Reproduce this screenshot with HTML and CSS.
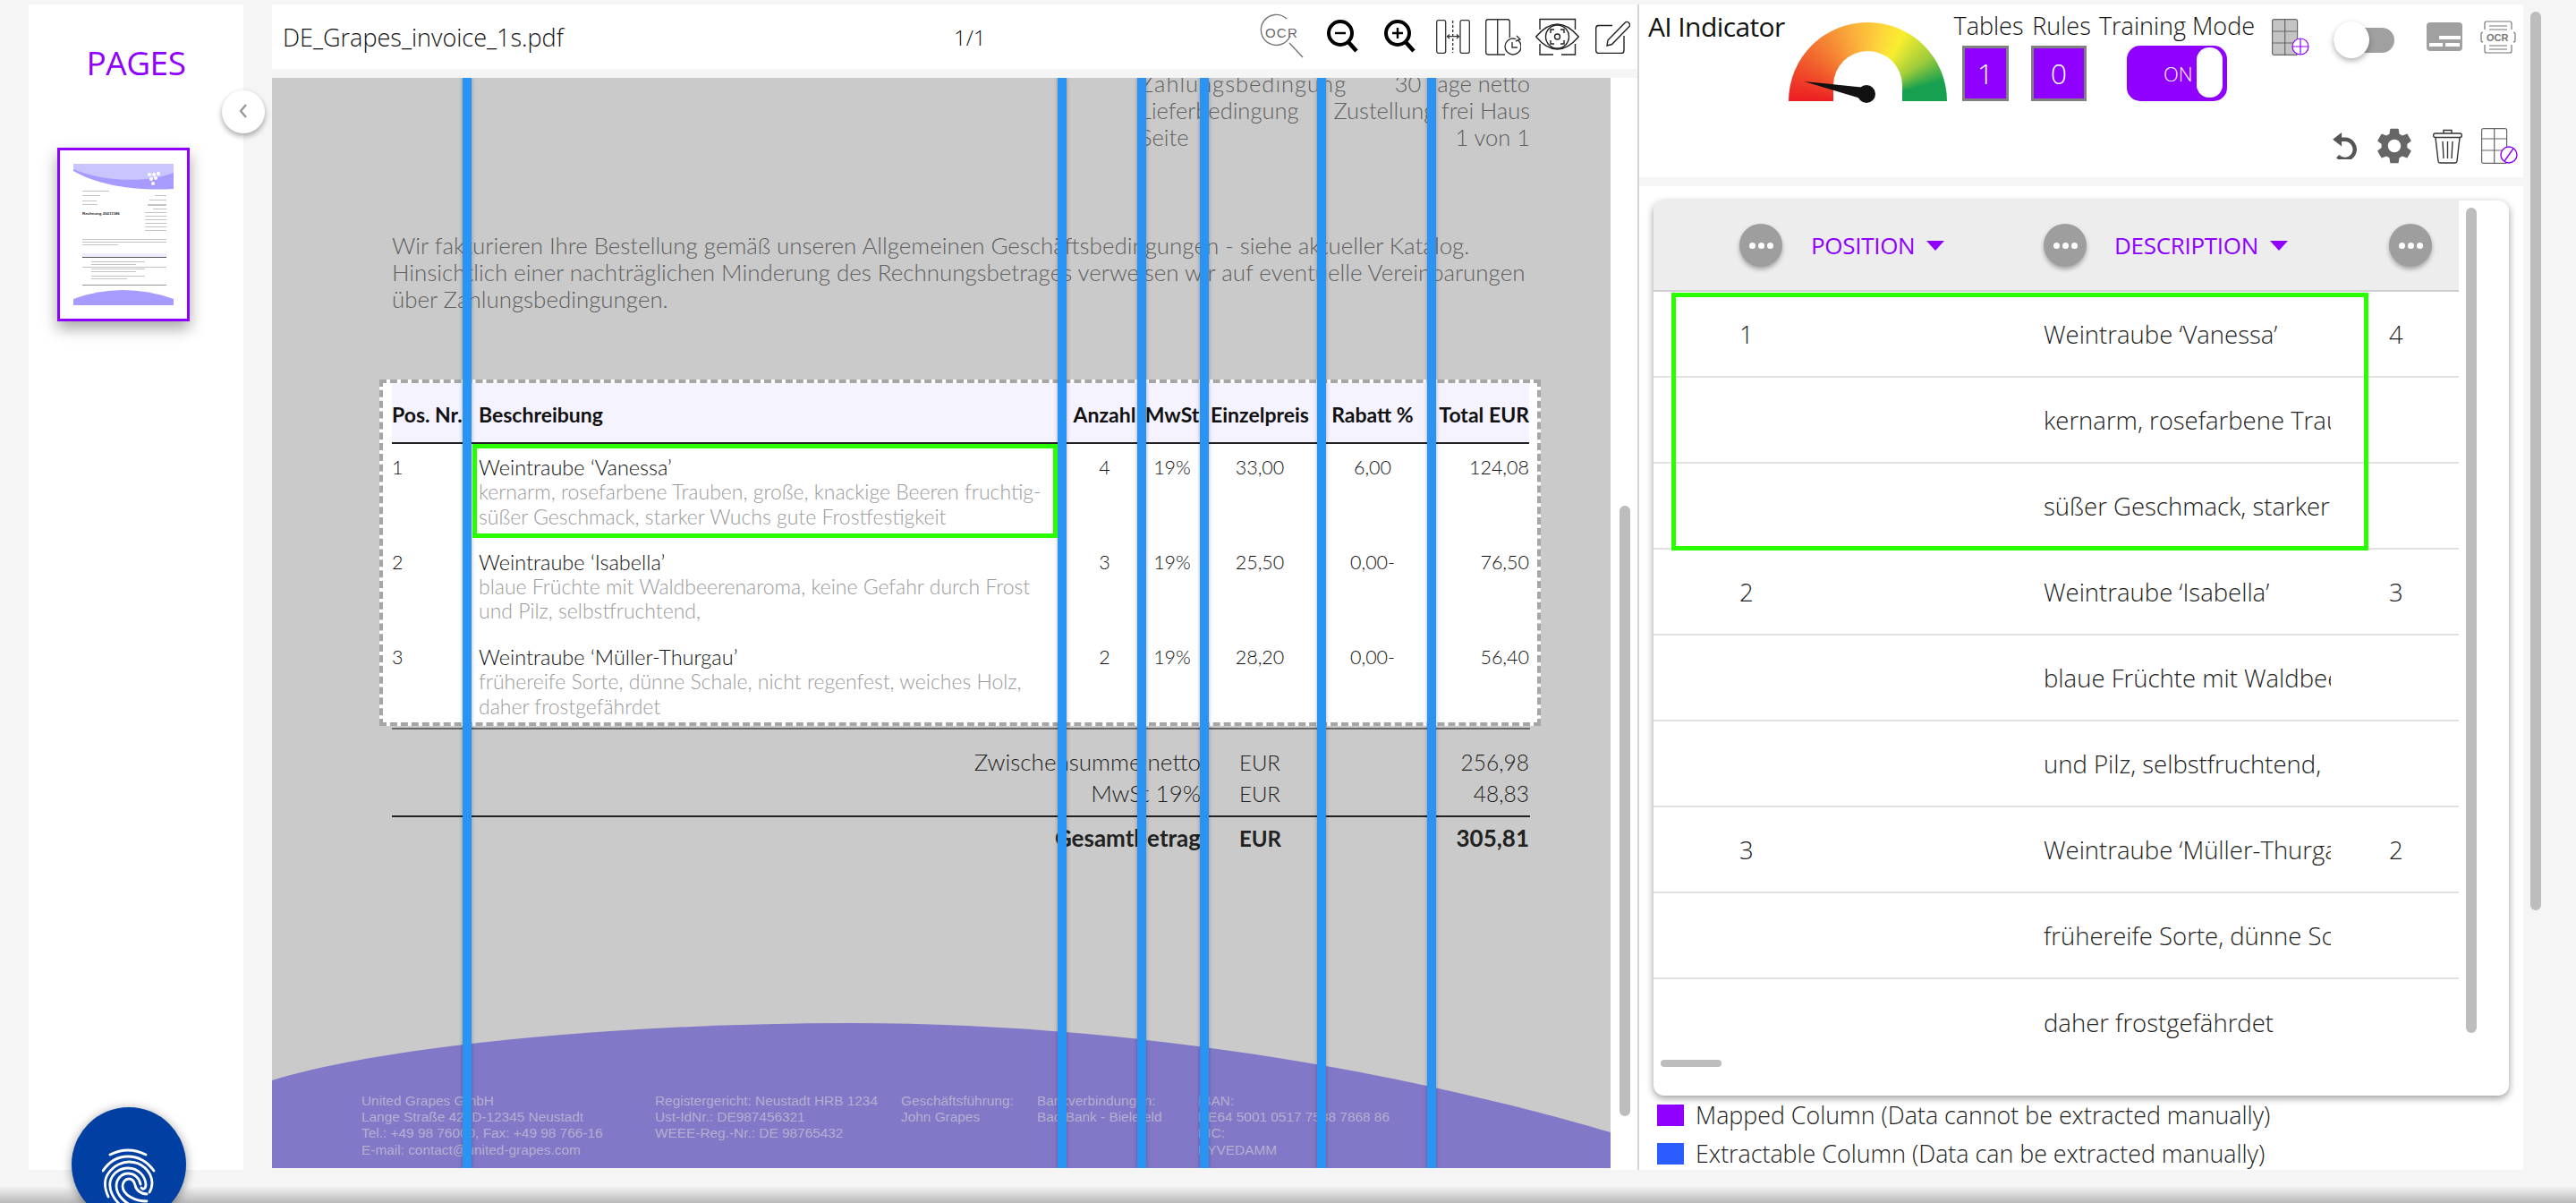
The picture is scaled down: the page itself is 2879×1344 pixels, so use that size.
FILE: index.html
```html
<!DOCTYPE html>
<html lang="en">
<head>
    <meta charset="UTF-8">
    <title>Invoice Mapping</title>
    <link rel="stylesheet" href="styles.css">
</head>
<body>
<div class="app">
    <!-- Pages sidebar -->
    <aside class="sidebar">
        <h2 class="pages-title">PAGES</h2>
        <div class="thumb">
            <svg width="142" height="188" viewBox="0 0 142 188">
                <path d="M15 15H127V43C85 46 40 38 15 23Z" fill="#a89bff"/>
                <path d="M15 15H127V25C100 36 50 36 15 21Z" fill="#c9c6ff"/>
                <g fill="#fff"><circle cx="100" cy="27" r="2"/><circle cx="105" cy="27" r="2"/><circle cx="110" cy="26" r="2"/><circle cx="102" cy="32" r="2"/><circle cx="107" cy="31" r="2"/><circle cx="104" cy="37" r="2"/></g>
                <g fill="#c4c4c4">
                    <rect x="25" y="45" width="30" height="1"/><rect x="25" y="50" width="20" height="1"/><rect x="25" y="56" width="16" height="1"/><rect x="25" y="60" width="17" height="1"/>
                    <rect x="106" y="50" width="13" height="1"/><rect x="100" y="55" width="19" height="1"/><rect x="98" y="60" width="21" height="2"/><rect x="104" y="65" width="15" height="1"/>
                    <rect x="95" y="69" width="24" height="1"/><rect x="95" y="73" width="24" height="1"/><rect x="95" y="77" width="24" height="1"/><rect x="95" y="81" width="24" height="1"/><rect x="95" y="85" width="24" height="1"/><rect x="95" y="89" width="24" height="1"/>
                    <rect x="25" y="99" width="94" height="1"/><rect x="25" y="102" width="94" height="1"/><rect x="25" y="105" width="40" height="1"/>
                    <rect x="35" y="124" width="60" height="1"/><rect x="35" y="127" width="50" height="1"/><rect x="35" y="132" width="60" height="1"/><rect x="35" y="135" width="50" height="1"/><rect x="35" y="140" width="60" height="1"/><rect x="35" y="143" width="40" height="1"/>
                </g>
                <rect x="25" y="115" width="94" height="4" fill="#efedff"/>
                <rect x="25" y="119" width="94" height="1" fill="#555"/>
                <rect x="25" y="130" width="94" height="0.5" fill="#888"/>
                <rect x="25" y="150" width="94" height="1" fill="#999"/>
                <text class="thumb-text" x="25" y="72">Rechnung 20211186</text>
                <path d="M15 166Q70 146 127 166V173H15Z" fill="#a89bff"/>
            </svg>
        </div>
    </aside>
    <button class="collapse-btn">
        <svg width="10" height="18" viewBox="0 0 10 18"><path d="M8 2L2 9L8 16" fill="none" stroke="#999" stroke-width="2.4"/></svg>
    </button>

    <!-- Document viewer -->
    <main class="viewer">
        <header class="doc-header">
            <span class="doc-name">DE_Grapes_invoice_1s.pdf</span>
            <span class="doc-count">1/1</span>
            <div class="doc-tools">
                <svg class="tool-ocr" width="52" height="52" viewBox="0 0 52 52">
                    <path d="M31 7A17 17 0 1 0 35 26" fill="none" stroke="#777" stroke-width="1.4"/>
                    <path d="M34 34L49 50" stroke="#777" stroke-width="1.4"/>
                    <text class="ocr-text" x="7" y="28">OCR</text>
                </svg>
                <svg class="tool-zoom-out" width="36" height="40" viewBox="0 0 36 40">
                    <circle cx="16" cy="17" r="13" fill="none" stroke="#000" stroke-width="4"/>
                    <path d="M25 27L34 37" stroke="#000" stroke-width="4.6"/>
                    <path d="M10 17H22" stroke="#000" stroke-width="2.4"/>
                </svg>
                <svg class="tool-zoom-in" width="36" height="40" viewBox="0 0 36 40">
                    <circle cx="16" cy="17" r="13" fill="none" stroke="#000" stroke-width="4"/>
                    <path d="M25 27L34 37" stroke="#000" stroke-width="4.6"/>
                    <path d="M10 17H22M16 11V23" stroke="#000" stroke-width="2.4"/>
                </svg>
                <svg class="tool-split" width="38" height="38" viewBox="0 0 38 38" fill="none" stroke="#333" stroke-width="1.3">
                    <rect x="0.7" y="0.7" width="10" height="36.6" rx="2"/>
                    <rect x="27" y="0.7" width="10.3" height="36.6" rx="2"/>
                    <path d="M18.7 1V37" stroke-dasharray="3 2"/>
                    <path d="M13 18.7H25M15 16.5L12.5 18.7L15 21M23 16.5L25.5 18.7L23 21"/>
                </svg>
                <svg class="tool-clock" width="40" height="41" viewBox="0 0 40 41" fill="none" stroke="#333" stroke-width="1.4">
                    <path d="M22 40H3A2.5 2.5 0 0 1 .7 37.5V3A2.5 2.5 0 0 1 3 .7H25A2.5 2.5 0 0 1 27.3 3V21"/>
                    <path d="M13.7 1V40"/>
                    <circle cx="31" cy="31" r="9" fill="#fff"/>
                    <path d="M30 26V32H36"/>
                    <path d="M35 19L39 23L34 25" fill="#fff"/>
                </svg>
                <svg class="tool-eye" width="49" height="42" viewBox="0 0 49 42" fill="none" stroke="#222" stroke-width="1.4">
                    <path d="M5 13V1.5H44.5V13M5 29V41H20M29 41H44.5V29"/>
                    <path d="M.7 21C10 10 17 7 24.5 7S39 10 48.3 21C39 32 32 35 24.5 35S10 32 .7 21Z" fill="#fff"/>
                    <circle cx="24.5" cy="21" r="13"/>
                    <circle cx="24.5" cy="21" r="3"/>
                    <path d="M17 17V13H21M28 13H32V17M32 25V29H28M21 29H17V25"/>
                </svg>
                <svg class="tool-edit" width="39" height="38" viewBox="0 0 39 38" fill="none" stroke="#222" stroke-width="1.4">
                    <path d="M19 6.5H3.5A3 3 0 0 0 .7 9.5V34.5A3 3 0 0 0 3.5 37.5H29A3 3 0 0 0 32 34.5V18"/>
                    <path d="M14 23L33 3.5A2.8 2.8 0 0 1 37.5 8L18.500 27.500L13 29Z"/>
                </svg>
            </div>
        </header>
        <div class="doc-wrap">
            <section class="doc">
                <div class="doc-meta">
                    <div class="meta-row"><span>Zahlungsbedingung</span><span>30 Tage netto</span></div>
                    <div class="meta-row"><span>Lieferbedingung</span><span>Zustellung frei Haus</span></div>
                    <div class="meta-row"><span>Seite</span><span>1 von 1</span></div>
                </div>
                <p class="doc-intro">Wir fakturieren Ihre Bestellung gemäß unseren Allgemeinen Geschäftsbedingungen - siehe aktueller Katalog.<br>Hinsichtlich einer nachträglichen Minderung des Rechnungsbetrages verweisen wir auf eventuelle Vereinbarungen<br>über Zahlungsbedingungen.</p>
                <div class="invoice-box">
                    <table class="invoice">
                        <colgroup><col class="c-pos"><col class="c-desc"><col class="c-qty"><col class="c-tax"><col class="c-price"><col class="c-disc"><col class="c-total"></colgroup>
                        <thead>
                            <tr><th>Pos. Nr.</th><th>Beschreibung</th><th class="mid">Anzahl</th><th class="mid">MwSt</th><th class="mid">Einzelpreis</th><th class="mid">Rabatt %</th><th class="end">Total EUR</th></tr>
                        </thead>
                        <tbody>
                            <tr><td class="num">1</td><td>Weintraube ‘Vanessa’<span class="desc">kernarm, rosefarbene Trauben, große, knackige Beeren fruchtig-</span><span class="desc">süßer Geschmack, starker Wuchs gute Frostfestigkeit</span></td><td class="mid">4</td><td class="mid">19%</td><td class="mid">33,00</td><td class="mid">6,00</td><td class="end">124,08</td></tr>
                            <tr><td class="num">2</td><td>Weintraube ‘Isabella’<span class="desc">blaue Früchte mit Waldbeerenaroma, keine Gefahr durch Frost</span><span class="desc">und Pilz, selbstfruchtend,</span></td><td class="mid">3</td><td class="mid">19%</td><td class="mid">25,50</td><td class="mid">0,00-</td><td class="end">76,50</td></tr>
                            <tr><td class="num">3</td><td>Weintraube ‘Müller-Thurgau’<span class="desc">frühereife Sorte, dünne Schale, nicht regenfest, weiches Holz,</span><span class="desc">daher frostgefährdet</span></td><td class="mid">2</td><td class="mid">19%</td><td class="mid">28,20</td><td class="mid">0,00-</td><td class="end">56,40</td></tr>
                        </tbody>
                    </table>
                </div>
                <div class="sum-rule"></div>
                <div class="totals">
                    <span class="t-label">Zwischensumme netto</span><span class="t-cur">EUR</span><span class="t-val">256,98</span>
                    <span class="t-label">MwSt 19%</span><span class="t-cur">EUR</span><span class="t-val">48,83</span>
                </div>
                <div class="total-rule"></div>
                <div class="totals grand">
                    <span class="t-label">Gesamtbetrag</span><span class="t-cur">EUR</span><span class="t-val">305,81</span>
                </div>
                <footer class="doc-footer">
                    <svg class="footer-arc" width="1496" height="162" viewBox="0 0 1496 162"><path d="M0 64C130 24 400 0 646 0C950 0 1250 50 1496 122V162H0Z" fill="#8278c8"/></svg>
                    <div class="footer-cols">
                        <div>United Grapes GmbH<br>Lange Straße 42, D-12345 Neustadt<br>Tel.: +49 98 76000, Fax: +49 98 766-16<br>E-mail: contact@united-grapes.com</div>
                        <div>Registergericht: Neustadt HRB 1234<br>Ust-IdNr.: DE987456321<br>WEEE-Reg.-Nr.: DE 98765432</div>
                        <div>Geschäftsführung:<br>John Grapes</div>
                        <div>Bankverbindungen:<br>Bad Bank - Bielefeld</div>
                        <div>IBAN:<br>DE64 5001 0517 7538 7868 86<br>BIC:<br>BYVEDAMM</div>
                    </div>
                </footer>
                <i class="col-line l1"></i><i class="col-line l2"></i><i class="col-line l3"></i><i class="col-line l4"></i><i class="col-line l5"></i><i class="col-line l6"></i>
                <i class="hit-box"></i>
            </section>
            <div class="doc-rail"><div class="doc-thumb"></div></div>
        </div>
    </main>

    <!-- Mapping panel -->
    <div class="panel">
        <section class="controls">
            <div class="top-row">
                <h3 class="ai-title">AI Indicator</h3>
                <div class="gauge">
                    <svg class="needle" width="90" height="40" viewBox="0 0 90 40"><path d="M7 6L76 13L74 26Z" fill="#111"/><circle cx="77" cy="20" r="10" fill="#111"/></svg>
                </div>
                <div class="stat stat-tables"><span class="stat-label">Tables</span><div class="stat-box box-tables">1</div></div>
                <div class="stat stat-rules"><span class="stat-label">Rules</span><div class="stat-box box-rules">0</div></div>
                <div class="stat stat-mode"><span class="stat-label">Training Mode</span><div class="mode-toggle"><span>ON</span><i></i></div></div>
                <svg class="icon-add" width="42" height="41" viewBox="0 0 42 41" fill="none" stroke="#666" stroke-width="1.2">
                    <rect x="0.6" y="0.6" width="28" height="39.800" rx="2" fill="#c4c4c4"/>
                    <path d="M14.700 1V40M1 14H28M1 27H28"/>
                    <circle cx="32" cy="31" r="9" fill="#fff" stroke="#8f00ff"/>
                    <path d="M23 31H41M32 22V40" stroke="#8f00ff"/>
                </svg>
                <div class="grey-switch"><i></i></div>
                <svg class="icon-card" width="40" height="32" viewBox="0 0 40 32">
                    <rect width="40" height="32" rx="4" fill="#a0a0a0"/>
                    <path d="M14 17H38M3 25H18M21 25H37" stroke="#fff" stroke-width="4"/>
                </svg>
                <svg class="icon-ocr" width="40" height="37" viewBox="0 0 40 37" fill="none" stroke="#777" stroke-width="1.2">
                    <path d="M5 10V3Q5 1 7 1H33Q35 1 35 3V10M5 27V34Q5 36 7 36H33Q35 36 35 34V27"/>
                    <path d="M10 6H30M10 10H30M10 28H30M10 32H30"/>
                    <path d="M3 13Q1 13 1 15V22Q1 24 3 24M37 13Q39 13 39 15V22Q39 24 37 24"/>
                    <text class="ocr-small" x="7" y="23">OCR</text>
                </svg>
            </div>
            <div class="tool-row">
                <svg class="icon-undo" width="30" height="30" viewBox="0 0 27 27">
                    <path d="M8 7H13A10 10 0 1 1 6 24" fill="none" stroke="#555" stroke-width="4"/>
                    <path d="M10 0V14L1 7Z" fill="#555"/>
                </svg>
                <svg class="icon-gear" width="48" height="48" viewBox="0 0 24 24"><path fill="#666" d="M19.14 12.94c.04-.3.06-.61.06-.94 0-.32-.02-.64-.07-.94l2.03-1.58c.18-.14.23-.41.12-.61l-1.92-3.32c-.12-.22-.37-.29-.59-.22l-2.39.96c-.5-.38-1.03-.7-1.62-.94l-.36-2.54c-.04-.24-.24-.41-.48-.41h-3.84c-.24 0-.43.17-.47.41l-.36 2.54c-.59.24-1.13.57-1.62.94l-2.39-.96c-.22-.08-.47 0-.59.22L2.74 8.87c-.12.21-.08.47.12.61l2.03 1.58c-.05.3-.09.63-.09.94s.02.64.07.94l-2.03 1.58c-.18.14-.23.41-.12.61l1.92 3.32c.12.22.37.29.59.22l2.39-.96c.5.38 1.03.7 1.62.94l.36 2.54c.05.24.24.41.48.41h3.84c.24 0 .44-.17.47-.41l.36-2.54c.59-.24 1.13-.56 1.62-.94l2.39.96c.22.08.47 0 .59-.22l1.92-3.32c.12-.22.07-.47-.12-.61l-2.01-1.58zM12 15.6c-1.98 0-3.6-1.62-3.6-3.6s1.62-3.6 3.6-3.6 3.6 1.62 3.6 3.6-1.62 3.6-3.6 3.6z"/></svg>
                <svg class="icon-trash" width="33" height="39" viewBox="0 0 33 39" fill="none" stroke="#333" stroke-width="1.4">
                    <path d="M12 5V1.500H21V5"/>
                    <rect x="0.7" y="5" width="31.600" height="4.500" rx="2"/>
                    <path d="M3 10L6 36Q6.300 38 8 38H25Q26.700 38 27 36L30 10"/>
                    <path d="M11 14L12 33M16.500 14V33M22 14L21 33"/>
                </svg>
                <svg class="icon-block" width="41" height="40" viewBox="0 0 41 40" fill="none" stroke="#666" stroke-width="1.2">
                    <rect x="0.6" y="0.6" width="28" height="38.800" rx="2"/>
                    <path d="M14.700 1V39M1 12H28M1 25H28"/>
                    <circle cx="31" cy="30" r="9" fill="#fff" stroke="#8f00ff" stroke-width="1.4"/>
                    <path d="M26 37L36 23" stroke="#8f00ff" stroke-width="1.4"/>
                </svg>
            </div>
        </section>

        <section class="mapping">
            <div class="map-card">
                <div class="map-view">
                    <div class="map-head">
                        <div class="map-col"><span class="dots"><i></i><i></i><i></i></span><span class="map-name">POSITION</span><i class="caret"></i></div>
                        <div class="map-col"><span class="dots"><i></i><i></i><i></i></span><span class="map-name">DESCRIPTION</span><i class="caret"></i></div>
                        <div class="map-col"><span class="dots"><i></i><i></i><i></i></span></div>
                    </div>
                    <div class="map-row"><span>1</span><span>Weintraube ‘Vanessa’</span><span>4</span></div>
                    <div class="map-row"><span></span><span>kernarm, rosefarbene Trauben, große</span><span></span></div>
                    <div class="map-row"><span></span><span>süßer Geschmack, starker Wuchs gute</span><span></span></div>
                    <div class="map-row"><span>2</span><span>Weintraube ‘Isabella’</span><span>3</span></div>
                    <div class="map-row"><span></span><span>blaue Früchte mit Waldbeerenaroma</span><span></span></div>
                    <div class="map-row"><span></span><span>und Pilz, selbstfruchtend,</span><span></span></div>
                    <div class="map-row"><span>3</span><span>Weintraube ‘Müller-Thurgau’</span><span>2</span></div>
                    <div class="map-row"><span></span><span>frühereife Sorte, dünne Schale, nicht</span><span></span></div>
                    <div class="map-row last"><span></span><span>daher frostgefährdet</span><span></span></div>
                </div>
                <i class="map-hit"></i>
                <i class="map-vscroll"></i>
                <i class="map-hscroll"></i>
            </div>
            <div class="legend-row"><i class="swatch mapped"></i>Mapped Column (Data cannot be extracted manually)</div>
            <div class="legend-row"><i class="swatch extract"></i>Extractable Column (Data can be extracted manually)</div>
        </section>
    </div>
    <div class="page-scroll"></div>
</div>
<div class="bottom-bar"></div>

<button class="finger-btn">
    <svg width="60" height="68" viewBox="0 0 60 68" fill="none" stroke="#fff" stroke-width="2.8" stroke-linecap="round">
        <path d="M9 8Q29 -2 49 8"/>
        <path d="M1 26C10 13 21 10 29 10C39 10 50 15 58 26"/>
        <path d="M7 55C3 46 2 36 7 29C14 19 24 16 30 16C44 16 55 26 56 39C56 44 55 47 53 50"/>
        <path d="M20 64C12 56 8 47 9 39C11 28 21 23 29 23C41 23 48 32 49 41C49 46 46 48 44 45"/>
        <path d="M38 67C26 63 16 53 16 43C16 35 22 29 29 29C37 29 42 35 43 41"/>
        <path d="M50 60C37 60 23 53 23 43C23 39 26 35 30 35C34 35 36 38 37 42C38 48 44 52 50 52"/>
    </svg>
</button>
</body>
</html>
```

FILE: styles.css
```css
/* General Styling */
* {
    box-sizing: border-box;
}
html, body {
    height: 100%;
}
body {
    margin: 0;
    width: 2879px;
    height: 1344px;
    overflow: hidden;
    position: relative;
    background-color: #f5f5f5;
    font-family: "Open Sans", sans-serif;
    font-weight: 300;
    color: #111;
}
h2, h3, p {
    margin: 0;
    font-weight: inherit;
}
i {
    display: block;
}
.app {
    display: flex;
    align-items: flex-start;
    height: 1325px;
    padding: 5px 0 0 32px;
}
.bottom-bar {
    height: 19px;
    background: linear-gradient(#f5f5f5, #b8b8b8);
}

/* Pages sidebar */
.sidebar {
    flex: none;
    width: 240px;
    height: 1302px;
    margin-right: 32px;
    padding-top: 42px;
    background-color: #fff;
}
.pages-title {
    width: 240px;
    text-align: center;
    color: #8f00ff;
    font-size: 37px;
    font-weight: 400;
    line-height: 46px;
    letter-spacing: -0.5px;
}
.thumb {
    width: 148px;
    height: 194px;
    margin: 72px 0 0 32px;
    border: 3px solid #8f00ff;
    background-color: #fff;
    box-shadow: 0 8px 16px rgba(0, 0, 0, 0.35);
}
.thumb svg {
    display: block;
}
.thumb-text {
    font-family: "Liberation Sans", sans-serif;
    font-size: 4.4px;
    font-weight: 700;
    fill: #222;
}
.collapse-btn {
    position: absolute;
    left: 248px;
    top: 101px;
    width: 48px;
    height: 48px;
    padding: 0;
    border: none;
    border-radius: 50%;
    background-color: #fff;
    box-shadow: 0 3px 6px rgba(0, 0, 0, 0.35);
}
.finger-btn {
    position: absolute;
    left: 80px;
    top: 1237px;
    width: 128px;
    height: 128px;
    padding: 30px 0 0 0;
    border: none;
    border-radius: 50%;
    background-color: #023fa3;
    box-shadow: 0 2px 12px rgba(0, 0, 0, 0.4);
    text-align: center;
    line-height: 0;
}
.finger-btn svg {
    vertical-align: top;
}

/* Document viewer */
.viewer {
    flex: none;
    width: 1528px;
    height: 1302px;
    border-right: 2px solid #d4d4d4;
}
.doc-header {
    display: flex;
    align-items: center;
    height: 72px;
    padding-left: 12px;
    margin-bottom: 10px;
    background-color: #fff;
}
.doc-name {
    width: 750px;
    font-size: 27px;
}
.doc-count {
    font-size: 24px;
}
.doc-tools {
    display: flex;
    align-items: flex-start;
    align-self: flex-start;
    margin-left: auto;
    padding-right: 8px;
}
.doc-tools svg {
    display: block;
}
.tool-ocr { margin-top: 9px; }
.tool-zoom-out { margin: 15px 0 0 23px; }
.tool-zoom-in { margin: 15px 0 0 28px; }
.tool-split { margin: 17px 0 0 23px; }
.tool-clock { margin: 16px 0 0 17px; }
.tool-eye { margin: 15px 0 0 16px; }
.tool-edit { margin: 17px 0 0 18px; }
.ocr-text {
    font-family: "Liberation Sans", sans-serif;
    font-size: 15px;
    letter-spacing: 1.2px;
    fill: #666;
}
.doc-wrap {
    display: flex;
    height: 1220px;
}
.doc {
    position: relative;
    display: flex;
    flex-direction: column;
    flex: none;
    width: 1496px;
    height: 1218px;
    overflow: hidden;
    background-color: #cacaca;
    font-family: Lato, sans-serif;
    font-weight: 300;
}
.doc-rail {
    flex: 1;
    height: 1220px;
    padding: 478px 0 0 10px;
    background-color: #fff;
}
.doc-thumb {
    width: 12px;
    height: 682px;
    border-radius: 6px;
    background-color: #bdbdbd;
}
.doc-meta {
    width: 436px;
    margin: -9px 0 0 970px;
    color: #606060;
    font-size: 25.500px;
    line-height: 30px;
}
.meta-row {
    display: flex;
    justify-content: space-between;
    white-space: nowrap;
}
.meta-row:first-child span:first-child {
    letter-spacing: 1px;
}
.doc-intro {
    margin: 91px 0 0 134px;
    color: #606060;
    font-size: 25.900px;
    line-height: 30px;
    white-space: nowrap;
}
.invoice-box {
    flex: none;
    width: 1298px;
    height: 387px;
    margin: 75px 0 0 120px;
    padding: 0 9px 0 10px;
    border: 4px dashed #a6a6a6;
    background-color: #fff;
    overflow: hidden;
}
.invoice {
    width: 1271px;
    table-layout: fixed;
    border-collapse: collapse;
    font-size: 23.500px;
    color: #111;
}
.c-pos { width: 97px; }
.c-desc { width: 664px; }
.c-qty { width: 71px; }
.c-tax { width: 80px; }
.c-price { width: 116px; }
.c-disc { width: 136px; }
.c-total { width: 107px; }
.invoice th {
    height: 67px;
    padding: 4px 0 0 0;
    background-color: #f5f3ff;
    border-bottom: 2px solid #222;
    text-align: left;
    font-size: 23px;
    font-weight: 700;
    white-space: nowrap;
}
.invoice td {
    height: 106.500px;
    padding: 13px 0 0 0;
    vertical-align: top;
    line-height: 27.300px;
    white-space: nowrap;
}
.invoice .mid {
    text-align: center;
}
.invoice .end {
    text-align: right;
}
.invoice td.mid, .invoice td.end, .invoice td.num {
    font-size: 21.500px;
}
.desc {
    display: block;
    color: #9a9a9a;
    font-size: 23px;
}
.sum-rule {
    flex: none;
    width: 1272px;
    height: 2px;
    margin: 2px 0 0 134px;
    background-color: #666;
}
.totals {
    display: grid;
    grid-template-columns: 904px 183px 184px;
    margin: 19px 0 0 134px;
    font-size: 24.500px;
    line-height: 35px;
    color: #222;
    white-space: nowrap;
}
.t-label {
    font-size: 26px;
    text-align: right;
}
.t-cur {
    padding-left: 43px;
    font-size: 24px;
}
.t-val {
    text-align: right;
}
.total-rule {
    flex: none;
    width: 1272px;
    height: 2px;
    margin: 7px 0 0 134px;
    background-color: #222;
}
.grand {
    margin-top: 6px;
    font-size: 26px;
    font-weight: 700;
}
.doc-footer {
    position: relative;
    flex: none;
    height: 162px;
    margin-top: auto;
}
.footer-arc {
    position: absolute;
    left: 0;
    top: 0;
}
.footer-cols {
    position: relative;
    display: grid;
    grid-template-columns: 328px 275px 152px 180px auto;
    padding: 78px 0 0 100px;
    color: #b4afd0;
    font-family: "Liberation Sans", sans-serif;
    font-size: 15.400px;
    font-weight: 400;
    line-height: 18.200px;
    white-space: nowrap;
}

/* Overlays on the pdf */
.col-line {
    position: absolute;
    top: 0;
    bottom: 0;
    width: 10px;
    background-color: #2a94f4;
    box-shadow: 0 0 4px rgba(0, 0, 0, 0.3);
}
.l1 { left: 213px; }
.l2 { left: 878px; }
.l3 { left: 967px; }
.l4 { left: 1037px; }
.l5 { left: 1168px; }
.l6 { left: 1291px; }
.hit-box {
    position: absolute;
    left: 224px;
    top: 409px;
    width: 654px;
    height: 105px;
    border: 5px solid #2aff00;
}

/* Mapping panel */
.panel {
    flex: none;
    width: 988px;
    height: 1302px;
}
.controls {
    height: 193px;
    margin-bottom: 10px;
    background-color: #fff;
}
.top-row {
    display: flex;
    align-items: flex-start;
    height: 137px;
    padding-left: 10px;
}
.ai-title {
    flex: none;
    width: 157px;
    padding-top: 7px;
    font-size: 30px;
    line-height: 36px;
    font-weight: 400;
    letter-spacing: -0.6px;
    white-space: nowrap;
}
.gauge {
    position: relative;
    flex: none;
    width: 177px;
    height: 88px;
    margin-top: 20px;
    border-radius: 88px 88px 0 0;
    background: conic-gradient(from 270deg at 50% 100%, #ed1c24 0deg, #f26a2e 40deg, #f9a13a 70deg, #fdd33c 100deg, #f9ee2f 118deg, #9ccb3b 145deg, #16a04f 165deg, #16a04f 180deg);
}
.gauge::after {
    content: "";
    position: absolute;
    left: 50px;
    bottom: 0;
    width: 77px;
    height: 56px;
    border-radius: 39px 39px 0 0;
    background-color: #fff;
}
.needle {
    position: absolute;
    left: 10px;
    top: 60px;
    z-index: 1;
}
.stat {
    display: flex;
    flex-direction: column;
    align-items: center;
    flex: none;
}
.stat-label {
    height: 46px;
    padding-top: 7px;
    font-size: 27px;
    line-height: 34px;
    white-space: nowrap;
}
.stat-tables { width: 77px; margin-left: 8px; }
.stat-rules { width: 66px; margin-left: 10px; }
.stat-mode { width: 170px; margin-left: 11px; }
.stat-box {
    height: 62px;
    border: 3px solid #808080;
    background-color: #8f00ff;
    color: #fff;
    font-size: 32px;
    line-height: 56px;
    text-align: center;
}
.box-tables { width: 52px; margin-right: 7px; }
.box-rules { width: 62px; margin-right: 6px; }
.mode-toggle {
    position: relative;
    width: 112px;
    height: 62px;
    border-radius: 15px;
    background-color: #8f00ff;
    color: #fff;
    font-size: 22px;
    line-height: 62px;
}
.mode-toggle span {
    position: absolute;
    left: 41px;
}
.mode-toggle i {
    position: absolute;
    right: 5px;
    top: 2px;
    width: 29px;
    height: 56px;
    border-radius: 14px;
    background-color: #fff;
}
.top-row svg {
    display: block;
    flex: none;
}
.top-row .needle {
    position: absolute;
}
.icon-add { margin: 16px 0 0 21px; }
.grey-switch {
    position: relative;
    flex: none;
    width: 68px;
    height: 28px;
    margin: 26px 0 0 27px;
    border-radius: 14px;
    background-color: #a0a0a0;
}
.grey-switch i {
    position: absolute;
    left: 0;
    top: -7px;
    width: 40px;
    height: 41px;
    border-radius: 50%;
    background-color: #fff;
    box-shadow: 0 3px 6px rgba(0, 0, 0, 0.3);
}
.icon-card { margin: 20px 0 0 36px; }
.icon-ocr { margin: 18px 0 0 20px; }
.ocr-small {
    font-family: "Liberation Sans", sans-serif;
    font-size: 11px;
    font-weight: 700;
    stroke: none;
    fill: #777;
}
.tool-row {
    display: flex;
    align-items: center;
    height: 42px;
    padding-left: 774px;
}
.tool-row svg {
    display: block;
    flex: none;
}
.icon-gear { margin: 0 -4px 0 16px; }
.icon-trash { margin-left: 23px; }
.icon-block { margin-left: 21px; }

.mapping {
    height: 1099px;
    padding: 16px 0 0 16px;
    background-color: #fff;
}
.map-card {
    position: relative;
    width: 956px;
    height: 1000px;
    margin-bottom: 0;
    border-radius: 12px;
    background-color: #fff;
    box-shadow: 0 3px 8px rgba(0, 0, 0, 0.4);
}
.map-view {
    width: 900px;
    height: 965px;
    overflow: hidden;
    border-radius: 12px 0 0 0;
}
.map-head {
    display: grid;
    grid-template-columns: 340px 386px 1fr;
    align-items: center;
    height: 102px;
    padding-left: 96px;
    background-color: #ededed;
    border-bottom: 2px solid #cfcfcf;
}
.map-col {
    display: flex;
    align-items: center;
}
.dots {
    display: flex;
    align-items: center;
    justify-content: center;
    gap: 3px;
    width: 48px;
    height: 48px;
    border-radius: 50%;
    background-color: #9e9e9e;
    box-shadow: 0 3px 5px rgba(0, 0, 0, 0.3);
}
.dots i {
    width: 7px;
    height: 7px;
    border-radius: 50%;
    background-color: #fff;
}
.map-name {
    margin-left: 32px;
    color: #8f00ff;
    font-size: 26px;
    font-weight: 400;
    letter-spacing: -0.3px;
}
.map-col:nth-child(2) .map-name {
    margin-left: 31px;
}
.caret {
    width: 0;
    height: 0;
    margin-left: 13px;
    border-left: 10px solid transparent;
    border-right: 10px solid transparent;
    border-top: 11px solid #8f00ff;
}
.map-row {
    display: grid;
    grid-template-columns: 340px 321px 65px 1fr;
    align-items: center;
    height: 96px;
    padding-left: 96px;
    border-bottom: 2px solid #e2e2e2;
    font-size: 27.500px;
    color: #222;
    white-space: nowrap;
}
.map-row span {
    overflow: hidden;
}
.map-row span:last-child {
    grid-column: 4;
}
.map-row.last {
    border-bottom: none;
}
.map-hit {
    position: absolute;
    left: 20px;
    top: 103px;
    width: 779px;
    height: 288px;
    border: 5px solid #2aff00;
}
.map-vscroll {
    position: absolute;
    left: 908px;
    top: 8px;
    width: 12px;
    height: 922px;
    border-radius: 6px;
    background-color: #bdbdbd;
}
.map-hscroll {
    position: absolute;
    left: 8px;
    top: 960px;
    width: 68px;
    height: 8px;
    border-radius: 4px;
    background-color: #bdbdbd;
}
.legend-row {
    display: flex;
    align-items: center;
    height: 43px;
    padding-left: 4px;
    font-size: 26.800px;
    color: #222;
    white-space: nowrap;
}
.swatch {
    width: 30px;
    height: 24px;
    margin-right: 13px;
}
.mapped { background-color: #8f00ff; }
.extract { background-color: #2b5cff; }
.page-scroll {
    flex: none;
    width: 12px;
    height: 1004px;
    margin: 8px 0 0 8px;
    border-radius: 6px;
    background-color: #bdbdbd;
}
```
